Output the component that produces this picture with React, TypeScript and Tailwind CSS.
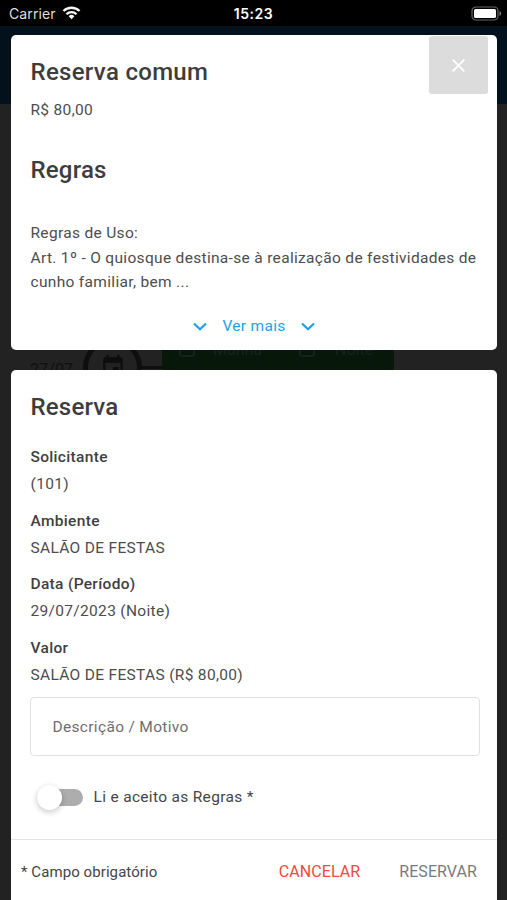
import React from "react";

const details = [
    { label: "Solicitante", value: "(101)" },
    { label: "Ambiente", value: "SALÃO DE FESTAS" },
    { label: "Data (Período)", value: "29/07/2023 (Noite)" },
    { label: "Valor", value: "SALÃO DE FESTAS (R$ 80,00)" },
];

function StatusBar(){
    return(
        <div className="grid grid-cols-3 items-center h-[26px] pt-[2px] bg-black text-white font-['Inter',sans-serif] text-[14px] leading-[24px]">
            <div className="flex items-center pl-[9px] gap-[6px] pb-px text-[#dedede]">
                <span className="tracking-[0.1px]">Carrier</span>
                <svg width="19" height="14" viewBox="0 0 20 15" fill="none" stroke="#f4f4f4" strokeWidth="2.5" className="-mt-[2px]">
                    <path d="M1.4 5.4a12.2 12.2 0 0 1 17.2 0" />
                    <path d="M4.6 8.8a7.7 7.7 0 0 1 10.8 0" />
                    <path d="M10 14.2 6.9 11a4.4 4.4 0 0 1 6.2 0z" fill="#f4f4f4" stroke="none" />
                </svg>
            </div>
            <span className="text-center font-semibold tracking-[0.5px] pb-px">15:23</span>
            <svg width="31" height="15" viewBox="0 0 31 15" className="justify-self-end mr-[5px] mb-[2px]">
                <rect x="1" y="1" width="26" height="13" rx="4" fill="none" stroke="#666" strokeWidth="1.2" />
                <rect x="3" y="3" width="22" height="9" rx="1.5" fill="#fff" />
                <path d="M28.5 5v5c1.1-.4 1.7-1.4 1.7-2.5S29.6 5.4 28.5 5z" fill="#777" />
            </svg>
        </div>
    )
}

// dimmed reservations page that stays under the dialog
function Backdrop(){
    return(
        <div className="flex flex-col h-full bg-[#222222]">
            <StatusBar />
            <div className="h-[78px] shrink-0 bg-[#02111c]"></div>
            <div className="flex items-center h-[60px] mt-[233px] pl-[30px] overflow-hidden">
                <span className="w-[53px] mt-[6px] text-[16px] text-[#101010] tracking-[0.1px]">27/07</span>
                <div className="flex items-center justify-center size-[59px] shrink-0 rounded-full border-[5px] border-[#0e0e0e]">
                    <svg width="26" height="26" viewBox="0 0 24 24" fill="#0d0d0d">
                        <path d="M17 12h-5v5h5v-5zM16 1v2H8V1H6v2H5c-1.11 0-1.99.9-1.99 2L3 19a2 2 0 0 0 2 2h14c1.1 0 2-.9 2-2V5c0-1.1-.9-2-2-2h-1V1h-2zm3 18H5V8h14v11z" />
                    </svg>
                </div>
                <div className="w-[20px] h-[3px] bg-[#0e0e0e]"></div>
                <div className="flex items-start w-[232px] h-[60px] pt-[3px] bg-[#07170a] text-[16px] leading-[20px] text-[#17241a]">
                    <span className="size-[16px] mt-px ml-[17px] rounded-[3px] border-2 border-[#17241a]"></span>
                    <span className="ml-[18px] w-[86px]">Manhã</span>
                    <span className="size-[16px] mt-px rounded-[3px] border-2 border-[#17241a]"></span>
                    <span className="ml-[20px]">Noite</span>
                </div>
            </div>
        </div>
    )
}

function Chevron(){
    return(
        <svg width="14" height="9" viewBox="0 0 14 9" fill="none" stroke="#1da1ea" strokeWidth="2.2" className="mt-[2px]">
            <path d="M1 1.5 7 7.3l6-5.8" />
        </svg>
    )
}

function RulesCard(){
    return(
        <div className="flex items-start justify-between h-[315px] rounded-[5px] bg-white pl-[19.5px] pr-[9.5px]">
            <div className="w-[450px] shrink-0 pt-[21px]">
                <h1 className="text-[24px] leading-[32px] font-medium tracking-[0.3px] text-[#3d3d3d]">Reserva comum</h1>
                <p className="mt-[10px] leading-[24px]">R$ 80,00</p>
                <h2 className="mt-[32px] text-[24px] leading-[32px] font-medium tracking-[0.2px] text-[#3d3d3d]">Regras</h2>
                <p className="mt-[35px] leading-[24.5px]">
                    Regras de Uso:<br />
                    Art. 1º - O quiosque destina-se à realização de festividades de cunho familiar, bem ...
                </p>
                <button className="flex items-center justify-center gap-[15px] w-[447px] mt-[19px] leading-[24px] text-[#1da1ea]">
                    <Chevron />
                    <span>Ver mais</span>
                    <Chevron />
                </button>
            </div>
            <button className="flex items-center justify-center -ml-[52px] mt-[1px] w-[59px] h-[58px] shrink-0 rounded-[3px] bg-[#dcdcdc]">
                <svg width="13" height="13" viewBox="0 0 13 13" stroke="#fff" strokeWidth="1.8">
                    <path d="M.6.6l11.8 11.8M12.4.6.6 12.4" />
                </svg>
            </button>
        </div>
    )
}

function ReservationCard(){
    return(
        <div className="flex flex-col flex-1 mt-[20px] rounded-t-[5px] bg-white">
            <div className="pl-[19.5px] pr-[17px] pt-[21px]">
                <h1 className="text-[24px] leading-[32px] font-medium tracking-[0.2px] text-[#3d3d3d]">Reserva</h1>
                <dl className="flex flex-col gap-[9.6px] mt-[21px]">
                    {details.map((item) => (
                        <div key={item.label} className="leading-[27px]">
                            <dt className="font-medium text-[#3f3f3f]">{item.label}</dt>
                            <dd>{item.value}</dd>
                        </div>
                    ))}
                </dl>
                <div className="flex items-center w-[450px] h-[59px] mt-[8px] -ml-[0.5px] pl-[21.5px] pt-[2px] rounded-[4px] border border-[#e0e0e0] text-[#6e6e6e]">
                    Descrição / Motivo
                </div>
                <div className="flex items-center gap-[10.5px] h-[30px] mt-[26.5px] pl-[6.5px]">
                    <div className="flex items-center w-[46px] h-[17px] rounded-full bg-[#adadad]">
                        <div className="size-[25px] rounded-full bg-white shadow-[0_2px_5px_1px_rgba(0,0,0,0.17)]"></div>
                    </div>
                    <span className="text-[#454545]">Li e aceito as Regras *</span>
                </div>
            </div>
            <div className="flex items-center flex-1 mt-[27px] pl-[10px] pr-[20px] pt-[4px] border-t border-[#e3e3e3]">
                <span className="text-[15px] tracking-[0.08px] text-[#454545]">* Campo obrigatório</span>
                <button className="ml-auto text-[16px] text-[#ef4a3c] tracking-[0.08px]">CANCELAR</button>
                <button className="ml-[39px] text-[16px] text-[#7b7b7b] tracking-[0.08px]">RESERVAR</button>
            </div>
        </div>
    )
}

export default function App(){
    return(
        <div className="relative w-[507px] h-[900px] overflow-hidden font-['Roboto',sans-serif]">
            <Backdrop />
            {/* dialog */}
            <div className="absolute inset-x-0 bottom-0 top-[35px] flex flex-col pl-[11px] pr-[10px] text-[15.5px] tracking-[0.32px] text-[#4d4d4d]">
                <RulesCard />
                <ReservationCard />
            </div>
        </div>
    )
}
